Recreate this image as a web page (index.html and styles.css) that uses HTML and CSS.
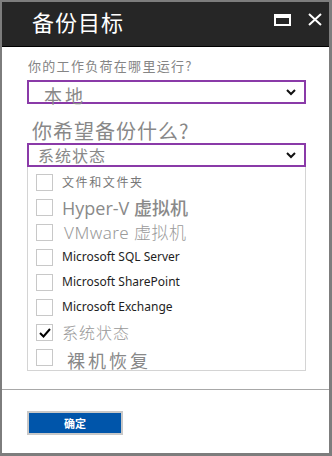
FILE: index.html
```html
<!DOCTYPE html>
<html lang="zh-CN">
<head>
    <meta charset="UTF-8" />
    <title>备份目标</title>
    <link rel="stylesheet" href="styles.css">
</head>
<body>
    <div class="frame">
        <div class="header">
            <div class="title">备份目标</div>
            <div class="header-icons">
                <svg class="icon-max" width="17" height="12" viewBox="0 0 17 12">
                    <rect x="1" y="1" width="15" height="10" fill="none" stroke="#fff" stroke-width="2" />
                    <rect x="1" y="1" width="15" height="3" fill="#fff" />
                </svg>
                <svg class="icon-close" width="14" height="13" viewBox="0 0 14 13">
                    <path d="M1 1 L13 12 M13 1 L1 12" stroke="#fff" stroke-width="2" fill="none" />
                </svg>
            </div>
        </div>

        <div class="content">
            <div class="label">你的工作负荷在哪里运行?</div>
            <div class="select select-where">
                <span>本地</span>
                <svg class="chevron" width="10" height="7" viewBox="0 0 10 7">
                    <polyline points="1,1 5,5 9,1" fill="none" stroke="#111" stroke-width="2" />
                </svg>
            </div>

            <div class="heading">你希望备份什么?</div>
            <div class="select select-what">
                <span>系统状态</span>
                <svg class="chevron" width="10" height="7" viewBox="0 0 10 7">
                    <polyline points="1,1 5,5 9,1" fill="none" stroke="#111" stroke-width="2" />
                </svg>
            </div>

            <div class="options">
                <div class="option"><span class="box"></span><span class="opt-files">文件和文件夹</span></div>
                <div class="option"><span class="box"></span><span class="opt-hyperv">Hyper-V 虚拟机</span></div>
                <div class="option"><span class="box"></span><span class="opt-vmware">VMware 虚拟机</span></div>
                <div class="option"><span class="box"></span><span class="opt-ms">Microsoft SQL Server</span></div>
                <div class="option"><span class="box"></span><span class="opt-ms">Microsoft SharePoint</span></div>
                <div class="option"><span class="box"></span><span class="opt-ms">Microsoft Exchange</span></div>
                <div class="option">
                    <span class="box">
                        <svg width="14" height="14" viewBox="0 0 14 14">
                            <polyline points="2,7 5.5,10.5 12,3" fill="none" stroke="#000" stroke-width="2" />
                        </svg>
                    </span>
                    <span class="opt-state">系统状态</span>
                </div>
                <div class="option"><span class="box"></span><span class="opt-bare">裸机恢复</span></div>
            </div>
        </div>

        <div class="footer">
            <button class="ok-btn">确定</button>
        </div>
    </div>
</body>
</html>
```

FILE: styles.css
```css
html,
body {
    margin: 0;
    padding: 0;
    background: #fff;
}

body {
    font-family: "Noto Sans", "Noto Sans CJK SC", sans-serif;
}

.frame {
    width: 332px;
    height: 456px;
    box-sizing: border-box;
    border: 2px solid #7d7d7d;
    border-right-width: 3px;
    border-bottom-width: 3px;
    display: flex;
    flex-direction: column;
    background: #fff;
}

.header {
    height: 44px;
    flex: none;
    background: #262626;
    border-bottom: 1px solid #000;
    display: flex;
    align-items: flex-start;
    justify-content: space-between;
    padding: 0 7px 0 30px;
}

.title {
    color: #fff;
    font-family: "Noto Sans CJK SC", sans-serif;
    font-size: 22px;
    line-height: 22px;
    margin-top: 8px;
    letter-spacing: 1px;
}

.header-icons {
    display: flex;
    align-items: center;
    gap: 17px;
    margin-top: 11px;
}

.content {
    padding: 0 23px 0 25px;
    flex: 1;
}

.label {
    font-family: "Noto Sans CJK SC", sans-serif;
    font-size: 13px;
    line-height: 15px;
    color: #858585;
    letter-spacing: 1.3px;
    margin: 11px 0 0 1px;
}

.select {
    height: 20px;
    border: 2px solid #8a3aa8;
    display: flex;
    align-items: center;
    justify-content: space-between;
    padding: 0 8px 0 12px;
    font-family: "Noto Sans CJK SC", sans-serif;
    color: #888;
}

.select-where {
    margin-top: 7px;
    font-size: 18px;
    letter-spacing: 3px;
}

.select-where span {
    margin-left: 3px;
    margin-top: 6px;
}

.select-what {
    margin-top: 2px;
    font-size: 16px;
    letter-spacing: 1px;
    padding-left: 9px;
}

.chevron {
    flex: none;
}

.heading {
    font-family: "Noto Sans CJK SC", sans-serif;
    font-size: 20px;
    line-height: 20px;
    color: #888;
    letter-spacing: 1px;
    margin: 17px 0 0 5px;
}

.options {
    border: 1px solid #d4d4d4;
    border-top: none;
    padding: 7px 0 0 8px;
    display: flex;
    flex-direction: column;
}

.option {
    height: 25px;
    display: flex;
    align-items: flex-start;
    gap: 9px;
}

.option:last-child {
    height: 21px;
}

.box {
    width: 15px;
    height: 15px;
    border: 1px solid #c8c8c8;
    flex: none;
    display: flex;
    align-items: center;
    justify-content: center;
}

.opt-files {
    font-family: "Noto Sans CJK SC", sans-serif;
    font-size: 12px;
    line-height: 14px;
    color: #777;
    letter-spacing: 1.6px;
    margin-top: 1px;
}

.opt-hyperv {
    font-family: "Open Sans", "Noto Sans CJK SC", sans-serif;
    font-size: 18px;
    line-height: 18px;
    color: #8a8a8a;
    font-weight: 500;
}

.opt-vmware {
    font-family: "Noto Sans", "Noto Sans CJK SC", sans-serif;
    font-size: 17px;
    line-height: 18px;
    color: #9a9a9a;
    font-weight: 300;
    letter-spacing: 0.5px;
    margin: 0 0 0 2px;
}

.opt-ms {
    font-family: "Noto Sans", sans-serif;
    font-size: 12px;
    line-height: 15px;
    color: #1e1e1e;
}

.opt-state {
    font-family: "Noto Sans CJK SC", sans-serif;
    font-size: 16px;
    line-height: 16px;
    color: #999;
    font-weight: 300;
    letter-spacing: 1px;
}

.opt-bare {
    font-family: "Noto Sans CJK SC", sans-serif;
    font-size: 18px;
    line-height: 18px;
    color: #888;
    letter-spacing: 3px;
    margin: 2px 0 0 5px;
}

.footer {
    box-sizing: border-box;
    flex: none;
    border-top: 1px solid #a8a8a8;
    height: 64px;
    padding: 21px 0 0 25px;
}

.ok-btn {
    width: 96px;
    height: 24px;
    background: #0055aa;
    border: 2px solid #c8c8c8;
    color: #fff;
    font-family: "Noto Sans CJK SC", sans-serif;
    font-size: 11px;
    font-weight: bold;
    padding: 0;
    margin: 0;
}
```
